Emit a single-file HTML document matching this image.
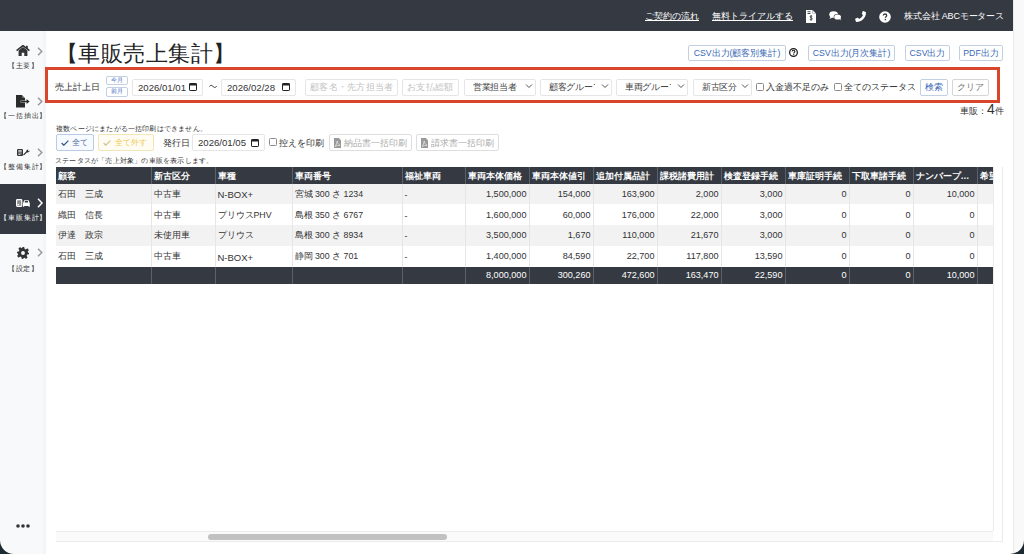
<!DOCTYPE html>
<html><head><meta charset="utf-8">
<style>
*{box-sizing:border-box;margin:0;padding:0}
html,body{width:1024px;height:554px;overflow:hidden;background:#fff;font-family:"Liberation Sans",sans-serif;color:#333}
.a{position:absolute}
.nw{white-space:nowrap}
#top{left:0;top:0;width:1013px;height:31px;background:#353a42}
#vscroll{left:1013px;top:0;width:11px;height:554px;background:#f9f9f9;border-left:1px solid #e9e9e9}
#side{left:0;top:31px;width:46px;height:523px;background:#f8f9fb;border-right:3px solid #f4f5f7}
.tlink{color:#fff;font-size:8.9px;text-decoration:underline;top:10px;line-height:12px;white-space:nowrap}
.lbl{font-size:7px;letter-spacing:0.8px;color:#333;white-space:nowrap;text-align:center;width:46px;left:0.4px;line-height:8px;margin-top:1px}
.btn{border:1px solid #c3d0e2;border-radius:2px;background:#fff;color:#3868b6;font-size:8.7px;text-align:center;white-space:nowrap;line-height:14px}
.inp{border:1px solid #e6e6e6;border-radius:2px;background:#fff;font-size:9.6px;color:#333;white-space:nowrap;line-height:16px;top:79px;height:17px}
.ph{color:#c2c2c2;font-size:8.6px;padding-left:4px;line-height:15px;letter-spacing:0.27px}
.sel{font-size:8.6px;color:#444;padding-left:8px;line-height:15px;overflow:hidden}
.sel span{display:inline-block;overflow:hidden;letter-spacing:-0.3px}
.chv{position:absolute;right:2px;top:3px;width:8px;height:6px}
.cb{width:8px;height:8px;border:1px solid #8a8a8a;border-radius:1.5px;background:#fff}
.t9{font-size:9px;color:#333;white-space:nowrap;line-height:12px}
table{border-collapse:collapse;table-layout:fixed;font-size:9px}
th{background:#353a42;color:#fff;font-weight:bold;text-align:left;padding:3.5px 2px 0 2px;height:16.5px;border-left:1px solid #5d6066;white-space:nowrap;overflow:hidden;font-size:8.8px}
td{height:20.8px;padding:2px 2px 0 2px;font-size:8.8px;border-left:1px solid #e6e6e6;white-space:nowrap;overflow:hidden;color:#333}
tr.o td{background:#f2f2f2}
td.r{text-align:right;font-size:9.1px;padding-top:0}
td.l{font-size:9.5px}
tr.f td{background:#353a42;color:#fff;height:17.6px;border-left:1px solid #5d6066}
</style></head><body>
<div id="top" class="a"></div>
<div id="vscroll" class="a"></div>
<div id="side" class="a"></div>

<!-- top bar -->
<div class="a tlink" style="left:645px">ご契約の流れ</div>
<div class="a tlink" style="left:712px">無料トライアルする</div>
<!-- file invoice dollar -->
<svg class="a" style="left:806px;top:10px" width="10" height="13" viewBox="0 0 10 13"><path d="M0 0H6.5L10 3.5V13H0Z" fill="#fff"/><path d="M6.5 0V3.5H10" fill="#353a42"/><path d="M6.6 0.2L9.8 3.4H6.6Z" fill="#fff"/><rect x="1.5" y="1.3" width="3" height="0.9" fill="#353a42"/><rect x="1.5" y="3" width="3" height="0.9" fill="#353a42"/><path d="M6.3 6.2C5.9 5.8 4 5.6 4 6.9C4 8 6.3 7.6 6.3 8.9C6.3 10.1 4.3 9.9 3.8 9.4M5.1 5.2V10.6" fill="none" stroke="#353a42" stroke-width="0.9"/></svg>
<!-- comments -->
<svg class="a" style="left:829px;top:11px" width="13" height="10" viewBox="0 0 13 10"><ellipse cx="4.6" cy="3.6" rx="4.3" ry="3.3" fill="#fff"/><path d="M1.5 5.8L0.6 8L3.5 6.6Z" fill="#fff"/><ellipse cx="8.6" cy="6" rx="4" ry="3.1" fill="#353a42"/><ellipse cx="8.6" cy="6" rx="3.4" ry="2.6" fill="#fff"/><path d="M10.5 8L12.3 9.6L11.2 7.2Z" fill="#fff"/></svg>
<!-- phone -->
<svg class="a" style="left:855px;top:11px" width="11" height="11" viewBox="0 0 11 11"><path d="M10.6 0.9L8.4 0.1C8 0 7.7 0.2 7.6 0.5L6.9 2.4C6.8 2.7 6.9 3 7.1 3.2L8 3.9C7.3 5.6 5.7 7.2 4 7.9L3.3 7C3.1 6.8 2.8 6.7 2.5 6.8L0.6 7.6C0.3 7.7 0.1 8 0.2 8.4L0.9 10.6C1 10.9 1.2 11 1.5 11C6.6 11 11 6.8 11 1.5C11 1.2 10.9 1 10.6 0.9Z" fill="#fff"/></svg>
<!-- question circle -->
<svg class="a" style="left:879px;top:11px" width="12" height="12" viewBox="0 0 12 12"><circle cx="6" cy="6" r="5.8" fill="#fff"/><path d="M4.3 4.6C4.3 3.6 5 3 6 3C7 3 7.7 3.6 7.7 4.5C7.7 5.6 6.4 5.7 6.4 6.8" fill="none" stroke="#353a42" stroke-width="1.3"/><circle cx="6.3" cy="8.6" r="0.8" fill="#353a42"/></svg>
<div class="a nw" style="left:904px;top:10.5px;color:#fff;font-size:9px;letter-spacing:-0.16px;line-height:11px">株式会社 ABCモータース</div>

<!-- sidebar -->
<svg class="a" style="left:16px;top:45px" width="14" height="11" viewBox="0 0 14 11"><path d="M0.6 5.6L7 0.6L13.4 5.6" fill="none" stroke="#333" stroke-width="1.6"/><rect x="10" y="0.8" width="1.8" height="3" fill="#333"/><path d="M2.6 5.4L7 1.9L11.4 5.4V11H8.3V7.8H5.7V11H2.6Z" fill="#333"/></svg>
<svg class="a" style="left:37px;top:47px" width="6" height="9" viewBox="0 0 6 9"><path d="M1 0.8L4.8 4.5L1 8.2" fill="none" stroke="#999" stroke-width="1.5"/></svg>
<div class="a lbl" style="top:61px">【主要】</div>

<svg class="a" style="left:16px;top:95px" width="14" height="13" viewBox="0 0 14 13"><path d="M0 0H5.8L9 3.2V5.6H4.6V7.4H9V12.6H0Z" fill="#2b2b2b"/><path d="M6.2 0.3L8.7 2.8H6.2Z" fill="#888"/><path d="M4.8 5.8H10.6V4L13.6 6.5L10.6 9V7.2H4.8Z" fill="#2b2b2b"/></svg>
<svg class="a" style="left:37px;top:97px" width="6" height="9" viewBox="0 0 6 9"><path d="M1 0.8L4.8 4.5L1 8.2" fill="none" stroke="#999" stroke-width="1.5"/></svg>
<div class="a lbl" style="top:111px">【一括抽出】</div>

<svg class="a" style="left:16.5px;top:149px" width="14" height="7" viewBox="0 0 14 7"><rect x="0.6" y="0.6" width="4.8" height="5.8" rx="0.6" fill="#777" stroke="#333" stroke-width="1.2"/><rect x="1.4" y="1.4" width="3.2" height="1" fill="#fff"/><rect x="1.6" y="5" width="1.5" height="0.8" fill="#fff"/><path d="M6.8 6.4L9.9 3.4C11.2 3.8 12.6 2.8 12.9 1.6L11.8 2.2L11 1.6L11.3 0.4C10 0.3 9 1.4 9.2 2.6L6.2 5.6Z" fill="#2b2b2b"/></svg>
<svg class="a" style="left:37px;top:148px" width="6" height="9" viewBox="0 0 6 9"><path d="M1 0.8L4.8 4.5L1 8.2" fill="none" stroke="#999" stroke-width="1.5"/></svg>
<div class="a lbl" style="top:162px">【整備集計】</div>

<div class="a" style="left:0;top:184px;width:46px;height:50px;background:#353a42"></div>
<svg class="a" style="left:16px;top:199px" width="15" height="8" viewBox="0 0 15 8"><rect x="0.6" y="0.6" width="5.2" height="6.8" rx="0.8" fill="#8a8c90" stroke="#fff" stroke-width="1.2"/><rect x="1.6" y="5" width="1.6" height="1" fill="#fff"/><path d="M7 4.2L8.2 1.2H12.6L13.8 4.2V7.8H12.6V7H8.2V7.8H7Z" fill="#fff"/><rect x="8.8" y="1.9" width="3.2" height="1.6" fill="#353a42"/></svg>
<svg class="a" style="left:37px;top:198px" width="6" height="10" viewBox="0 0 6 10"><path d="M1 0.8L5 5L1 9.2" fill="none" stroke="#fff" stroke-width="1.5"/></svg>
<div class="a lbl" style="top:213px;color:#fff">【車販集計】</div>

<svg class="a" style="left:17px;top:247px" width="12" height="12" viewBox="0 0 10 10"><path d="M4 0H6L6.3 1.5L7.4 2L8.6 1.1L9.9 2.5L9 3.7L9.5 4.8L10 5V6L8.5 6.3L8 7.4L8.9 8.6L7.5 9.9L6.3 9L5.2 9.5L5 10H4L3.7 8.5L2.6 8L1.4 8.9L0.1 7.5L1 6.3L0.5 5.2L0 5V4L1.5 3.7L2 2.6L1.1 1.4L2.5 0.1L3.7 1L4.8 0.5Z" fill="#333"/><circle cx="5" cy="5" r="1.6" fill="#f8f9fb"/></svg>
<svg class="a" style="left:37px;top:248px" width="6" height="9" viewBox="0 0 6 9"><path d="M1 0.8L4.8 4.5L1 8.2" fill="none" stroke="#999" stroke-width="1.5"/></svg>
<div class="a lbl" style="top:264px">【設定】</div>

<svg class="a" style="left:16px;top:524px" width="14" height="4" viewBox="0 0 14 4"><circle cx="2" cy="2" r="1.8" fill="#333"/><circle cx="7" cy="2" r="1.8" fill="#333"/><circle cx="12" cy="2" r="1.8" fill="#333"/></svg>

<!-- title -->
<div class="a nw" style="left:55.5px;top:38.5px;font-size:22px;letter-spacing:0.5px;color:#222;line-height:30px">【車販売上集計】</div>

<!-- header buttons -->
<div class="a btn" style="left:688px;top:45px;width:98px;height:16px">CSV出力(顧客別集計)</div>
<svg class="a" style="left:789.3px;top:47.8px" width="9" height="9" viewBox="0 0 9 9"><circle cx="4.5" cy="4.5" r="3.85" fill="none" stroke="#1a1a1a" stroke-width="1.25"/><path d="M3.1 3.6C3.1 2.7 3.7 2.3 4.5 2.3C5.3 2.3 5.9 2.8 5.9 3.5C5.9 4.4 4.7 4.4 4.7 5.4" fill="none" stroke="#1a1a1a" stroke-width="1.1"/><circle cx="4.7" cy="6.6" r="0.65" fill="#1a1a1a"/></svg>
<div class="a btn" style="left:808px;top:45px;width:87px;height:16px">CSV出力(月次集計)</div>
<div class="a btn" style="left:905px;top:45px;width:45px;height:16px">CSV出力</div>
<div class="a btn" style="left:959px;top:45px;width:44px;height:16px">PDF出力</div>

<!-- red box -->
<div class="a" style="left:45px;top:66.5px;width:955px;height:36.5px;border:3.5px solid #d9462b"></div>

<div class="a t9" style="left:55px;top:81px">売上計上日</div>
<div class="a btn" style="left:105.5px;top:76.3px;width:22.3px;height:9.2px;font-size:6px;line-height:7px;color:#3b66c4">今月</div>
<div class="a btn" style="left:105.5px;top:87px;width:22.3px;height:9.5px;font-size:6px;line-height:7.5px;color:#3b66c4">前月</div>
<div class="a inp" style="left:132px;width:71px;padding-left:5px">2026/01/01<svg class="a" style="right:5px;top:3px" width="8" height="8" viewBox="0 0 8 8"><rect x="0.5" y="0.5" width="7" height="7" rx="0.6" fill="none" stroke="#222" stroke-width="1"/><rect x="0.5" y="0.5" width="7" height="2" fill="#222"/></svg></div>
<svg class="a" style="left:209px;top:84px" width="8" height="5" viewBox="0 0 8 5"><path d="M0.3 2.6 C1.5 0.8 2.8 1.2 4 2.4 C5.2 3.6 6.5 4 7.7 2.2" fill="none" stroke="#333" stroke-width="0.9"/></svg>
<div class="a inp" style="left:221px;width:75px;padding-left:5px">2026/02/28<svg class="a" style="right:5px;top:3px" width="8" height="8" viewBox="0 0 8 8"><rect x="0.5" y="0.5" width="7" height="7" rx="0.6" fill="none" stroke="#222" stroke-width="1"/><rect x="0.5" y="0.5" width="7" height="2" fill="#222"/></svg></div>
<div class="a inp ph" style="left:305px;width:93px">顧客名・先方担当者</div>
<div class="a inp ph" style="left:402px;width:57px">お支払総額</div>
<div class="a inp sel" style="left:464px;width:72px"><span style="width:48px">営業担当者</span><svg class="chv" viewBox="0 0 8 6"><path d="M1 1.5L4 4.5L7 1.5" fill="none" stroke="#555" stroke-width="1"/></svg></div>
<div class="a inp sel" style="left:540px;width:72px"><span style="width:46px">顧客グループ</span><svg class="chv" viewBox="0 0 8 6"><path d="M1 1.5L4 4.5L7 1.5" fill="none" stroke="#555" stroke-width="1"/></svg></div>
<div class="a inp sel" style="left:616px;width:72px"><span style="width:46px">車両グループ</span><svg class="chv" viewBox="0 0 8 6"><path d="M1 1.5L4 4.5L7 1.5" fill="none" stroke="#555" stroke-width="1"/></svg></div>
<div class="a inp sel" style="left:693px;width:59px"><span style="width:40px">新古区分</span><svg class="chv" viewBox="0 0 8 6"><path d="M1 1.5L4 4.5L7 1.5" fill="none" stroke="#555" stroke-width="1"/></svg></div>
<div class="a cb" style="left:756px;top:83px"></div>
<div class="a t9" style="left:766px;top:81px">入金過不足のみ</div>
<div class="a cb" style="left:834px;top:83px"></div>
<div class="a t9" style="left:844px;top:81px">全てのステータス</div>
<div class="a btn" style="left:920px;top:79px;width:28px;height:17px;line-height:15px">検索</div>
<div class="a btn" style="left:952px;top:79px;width:37px;height:17px;line-height:15px;color:#777;border-color:#d6d6d6">クリア</div>

<div class="a t9" style="left:960px;top:103px">車販：<span style="font-size:14px">4</span>件</div>

<!-- row 2 -->
<div class="a nw" style="left:56px;top:124px;font-size:7px;letter-spacing:0.19px;color:#333;line-height:10px">複数ページにまたがる一括印刷はできません。</div>
<div class="a btn" style="left:56px;top:134px;width:38px;height:17px;background:#f7faff;border-color:#b9cbe6"><svg class="a" style="left:4px;top:5px" width="8" height="6" viewBox="0 0 8 6"><path d="M0.6 3L2.8 5.2L7.4 0.6" fill="none" stroke="#3b5a8a" stroke-width="1.3"/></svg><span class="a" style="left:15px;top:1px;font-size:8px;color:#50709e">全て</span></div>
<div class="a btn" style="left:98px;top:134px;width:56px;height:17px;background:#fffdf3;border-color:#f3e6b6"><svg class="a" style="left:4px;top:5px" width="8" height="6" viewBox="0 0 8 6"><path d="M0.6 3L2.8 5.2L7.4 0.6" fill="none" stroke="#cfc596" stroke-width="1.3"/></svg><span class="a" style="left:16px;top:1px;font-size:8.2px;color:#efcb55">全て外す</span></div>
<div class="a t9" style="left:163px;top:137px;font-size:8.8px">発行日</div>
<div class="a inp" style="left:192px;top:134px;width:73px;height:17px;padding-left:5px;line-height:16px">2026/01/05<svg class="a" style="right:5px;top:3.5px" width="8" height="8" viewBox="0 0 8 8"><rect x="0.5" y="0.5" width="7" height="7" rx="0.6" fill="none" stroke="#222" stroke-width="1"/><rect x="0.5" y="0.5" width="7" height="2" fill="#222"/></svg></div>
<div class="a cb" style="left:269px;top:138.3px"></div>
<div class="a t9" style="left:279px;top:137px;font-size:8.8px">控えを印刷</div>
<div class="a btn" style="left:329px;top:134px;width:83px;height:17px;border-color:#dedede"><svg class="a" style="left:4px;top:3px" width="7" height="10" viewBox="0 0 7 10"><path d="M0 0H4.8L7 2.2V10H0Z" fill="#999"/><path d="M1.2 8.5C2.2 7 3 5 3.2 3C3.6 5 4.5 6.5 6 7.4C4.3 7.2 2.8 7.6 1.2 8.5Z" fill="none" stroke="#eee" stroke-width="0.7"/></svg><span class="a" style="left:14px;top:1px;font-size:8.86px;color:#aaa">納品書一括印刷</span></div>
<div class="a btn" style="left:416px;top:134px;width:83px;height:17px;border-color:#dedede"><svg class="a" style="left:4px;top:3px" width="7" height="10" viewBox="0 0 7 10"><path d="M0 0H4.8L7 2.2V10H0Z" fill="#999"/><path d="M1.2 8.5C2.2 7 3 5 3.2 3C3.6 5 4.5 6.5 6 7.4C4.3 7.2 2.8 7.6 1.2 8.5Z" fill="none" stroke="#eee" stroke-width="0.7"/></svg><span class="a" style="left:14px;top:1px;font-size:8.86px;color:#aaa">請求書一括印刷</span></div>
<div class="a nw" style="left:55px;top:155.5px;font-size:7px;letter-spacing:0.2px;color:#333;line-height:10px">ステータスが「売上対象」の車販を表示します。</div>

<!-- table container -->
<div class="a" style="left:56px;top:167px;width:937px;height:364px;overflow:hidden">
<table style="width:985px">
<colgroup><col style="width:95px"><col style="width:64px"><col style="width:77px"><col style="width:110px"><col style="width:63px"><col style="width:64px"><col style="width:64px"><col style="width:64px"><col style="width:64px"><col style="width:64px"><col style="width:64px"><col style="width:64px"><col style="width:64px"><col style="width:64px"></colgroup>
<tr><th style="border-left:0">顧客</th><th>新古区分</th><th>車種</th><th>車両番号</th><th>福祉車両</th><th>車両本体価格</th><th>車両本体値引</th><th>追加付属品計</th><th>課税諸費用計</th><th>検査登録手続</th><th>車庫証明手続</th><th>下取車諸手続</th><th>ナンバープ…</th><th>希望番号</th></tr>
<tr class="o"><td style="border-left:0">石田　三成</td><td>中古車</td><td class="l">N-BOX+</td><td>宮城 <span class="l">300</span> さ <span class="l">1234</span></td><td>-</td><td class="r">1,500,000</td><td class="r">154,000</td><td class="r">163,900</td><td class="r">2,000</td><td class="r">3,000</td><td class="r">0</td><td class="r">0</td><td class="r">10,000</td><td></td></tr>
<tr><td style="border-left:0">織田　信長</td><td>中古車</td><td>プリウスPHV</td><td>島根 <span class="l">350</span> さ <span class="l">6767</span></td><td>-</td><td class="r">1,600,000</td><td class="r">60,000</td><td class="r">176,000</td><td class="r">22,000</td><td class="r">3,000</td><td class="r">0</td><td class="r">0</td><td class="r">0</td><td></td></tr>
<tr class="o"><td style="border-left:0">伊達　政宗</td><td>未使用車</td><td>プリウス</td><td>島根 <span class="l">300</span> さ <span class="l">8934</span></td><td>-</td><td class="r">3,500,000</td><td class="r">1,670</td><td class="r">110,000</td><td class="r">21,670</td><td class="r">3,000</td><td class="r">0</td><td class="r">0</td><td class="r">0</td><td></td></tr>
<tr><td style="border-left:0">石田　三成</td><td>中古車</td><td class="l">N-BOX+</td><td>静岡 <span class="l">300</span> さ <span class="l">701</span></td><td>-</td><td class="r">1,400,000</td><td class="r">84,590</td><td class="r">22,700</td><td class="r">117,800</td><td class="r">13,590</td><td class="r">0</td><td class="r">0</td><td class="r">0</td><td></td></tr>
<tr class="f"><td style="border-left:0"></td><td></td><td></td><td></td><td></td><td class="r">8,000,000</td><td class="r">300,260</td><td class="r">472,600</td><td class="r">163,470</td><td class="r">22,590</td><td class="r">0</td><td class="r">0</td><td class="r">10,000</td><td></td></tr>
</table>
</div>
<!-- container lines -->
<div class="a" style="left:993px;top:167px;width:1px;height:364px;background:#ebebeb"></div>
<div class="a" style="left:1002px;top:167px;width:1px;height:375px;background:#ebebeb"></div>
<!-- horizontal scrollbar -->
<div class="a" style="left:56px;top:531px;width:937px;height:11px;background:#fafafa;border-top:1px solid #ebebeb;border-bottom:1px solid #ebebeb"></div>
<div class="a" style="left:208px;top:534px;width:239px;height:6px;background:#c1c1c1;border-radius:3px"></div>
<div class="a" style="left:993px;top:541px;width:10px;height:1px;background:#ebebeb"></div>
<!-- window rounded corners -->
<svg class="a" style="left:0;top:540px" width="14" height="14" viewBox="0 0 14 14"><path d="M0 0V14H14A14 14 0 0 1 0 0Z" fill="#1d2b30"/></svg>
<svg class="a" style="left:1010px;top:540px" width="14" height="14" viewBox="0 0 14 14"><path d="M14 0V14H0A14 14 0 0 0 14 0Z" fill="#1d2b30"/></svg>
</body></html>
